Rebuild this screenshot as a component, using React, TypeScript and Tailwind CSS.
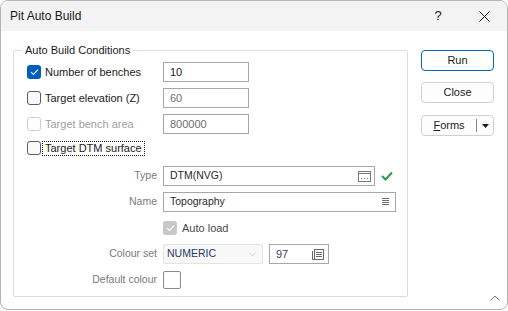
import { ChevronDown } from "lucide-react";

const ui = { fontFamily: '"Liberation Sans", Arial, sans-serif' };

const CheckMark = ({ color = "#ffffff" }: { color?: string }) => (
  <svg width="9" height="8" viewBox="0 0 9 8">
    <path d="M1 4.2 L3.4 6.4 L8 1.6" fill="none" stroke={color} strokeWidth="1.1" />
  </svg>
);

const Box = ({ checked, disabled }: { checked?: boolean; disabled?: boolean }) => {
  if (checked && disabled)
    return (
      <span className="flex h-[14px] w-[14px] shrink-0 items-center justify-center rounded-[3px] bg-[#c8c8c8]">
        <CheckMark />
      </span>
    );
  if (checked)
    return (
      <span className="flex h-[14px] w-[14px] shrink-0 items-center justify-center rounded-[3px] bg-[#005fb8]">
        <CheckMark />
      </span>
    );
  return (
    <span
      className={
        disabled
          ? "h-[14px] w-[14px] shrink-0 rounded-[3px] border border-[#cfcfcf] bg-white"
          : "h-[14px] w-[14px] shrink-0 rounded-[3px] border border-[#5c5c5c] bg-[#f9f9f9]"
      }
    />
  );
};

const Field = ({ value, dim, w = "w-[86px]" }: { value: string; dim?: boolean; w?: string }) => (
  <div
    className={`flex h-[20px] ${w} items-center border border-[#a6a6a6] bg-white pl-[6px] text-[11px] ${
      dim ? "text-[#6d6d6d]" : "text-[#1a1a1a]"
    }`}
  >
    {value}
  </div>
);

const SideLabel = ({ children }: { children: string }) => (
  <div className="w-[136px] shrink-0 pr-[6px] text-right text-[10.5px] text-[#7a7a7a]">{children}</div>
);

export default function App() {
  return (
    <div className="h-[311px] w-[508px] bg-white text-[#1a1a1a]" style={ui}>
      <div className="relative flex h-[310px] w-[508px] flex-col overflow-hidden rounded-[8px] border border-[#b4b4b4] bg-white">
        {/* title bar */}
        <div className="flex h-[30px] shrink-0 items-center justify-between bg-[#f3f3f3]">
          <span className="pl-[9px] text-[12px]">Pit Auto Build</span>
          <div className="flex h-full">
            <div className="flex w-[46px] items-center justify-center text-[13px] text-[#1a1a1a]">?</div>
            <div className="flex w-[46px] items-center justify-center">
              <svg width="11" height="11" viewBox="0 0 11 11">
                <path d="M0.5 0.5 L10.5 10.5 M10.5 0.5 L0.5 10.5" stroke="#1a1a1a" strokeWidth="1" />
              </svg>
            </div>
          </div>
        </div>

        {/* body */}
        <div className="flex flex-1 pl-[12px] pt-[19px]">
          <div className="relative h-[247px] w-[395px] shrink-0 rounded-[2px] border border-[#dcdcdc]">
            <span className="absolute -top-[8px] left-[8px] bg-white px-[3px] text-[11px] leading-[14px]">
              Auto Build Conditions
            </span>

            <div className="flex flex-col gap-[6px] pl-[13px] pt-[11px] text-[11px]">
              <div className="flex h-[20px] items-center">
                <div className="flex w-[136px] items-center gap-[4px]">
                  <Box checked />
                  <span>Number of benches</span>
                </div>
                <Field value="10" />
              </div>

              <div className="flex h-[20px] items-center">
                <div className="flex w-[136px] items-center gap-[4px]">
                  <Box />
                  <span>Target elevation (Z)</span>
                </div>
                <Field value="60" dim />
              </div>

              <div className="flex h-[20px] items-center">
                <div className="flex w-[136px] items-center gap-[4px] text-[#a0a0a0]">
                  <Box disabled />
                  <span>Target bench area</span>
                </div>
                <Field value="800000" dim />
              </div>

              <div className="-mt-[2px] mb-[2px] flex h-[20px] items-center">
                <div className="flex w-[136px] items-center gap-[1px]">
                  <Box />
                  <span className="border border-dotted border-[#1a1a1a] px-[2px] leading-[13px]">
                    Target DTM surface
                  </span>
                </div>
              </div>

              <div className="flex h-[20px] items-center">
                <SideLabel>Type</SideLabel>
                <div className="flex h-[20px] w-[212px] items-center justify-between border border-[#a6a6a6] pl-[6px] pr-[3px] text-[10.5px] text-[#2a2a2a]">
                  <span>DTM(NVG)</span>
                  <svg width="13" height="11" viewBox="0 0 13 11">
                    <rect x="0.5" y="0.5" width="12" height="10" fill="none" stroke="#7a7a7a" />
                    <line x1="0.5" y1="2.5" x2="12.5" y2="2.5" stroke="#7a7a7a" />
                    <rect x="3" y="7" width="1" height="1" fill="#6a6a6a" />
                    <rect x="6" y="7" width="1" height="1" fill="#6a6a6a" />
                    <rect x="9" y="7" width="1" height="1" fill="#6a6a6a" />
                  </svg>
                </div>
                <svg className="ml-[6px]" width="12" height="10" viewBox="0 0 12 10">
                  <path d="M1 5 L4.5 8.5 L11 1.5" fill="none" stroke="#2f9a4a" strokeWidth="2" />
                </svg>
              </div>

              <div className="flex h-[20px] items-center">
                <SideLabel>Name</SideLabel>
                <div className="flex h-[20px] w-[233px] items-center justify-between border border-[#a6a6a6] pl-[6px] pr-[6px] text-[10.5px] text-[#2a2a2a]">
                  <span>Topography</span>
                  <svg width="7" height="8" viewBox="0 0 7 8">
                    <path d="M0 0.5 H7 M0 2.5 H7 M0 4.5 H7 M0 6.5 H7" stroke="#6a6a6a" strokeWidth="1" />
                  </svg>
                </div>
              </div>

              <div className="flex h-[20px] items-center">
                <div className="w-[136px] shrink-0" />
                <Box checked disabled />
                <span className="ml-[5px] text-[#4a4a4a]">Auto load</span>
              </div>

              <div className="flex h-[20px] items-center">
                <SideLabel>Colour set</SideLabel>
                <div className="flex h-[20px] w-[100px] items-center justify-between rounded-[2px] border border-[#e3e3e3] bg-[#f8f8f8] pl-[3px] pr-[4px] text-[10.5px] text-[#243a6b]">
                  <span>NUMERIC</span>
                  <ChevronDown size={11} strokeWidth={1.2} color="#b5b5b5" />
                </div>
                <div className="ml-[6px] flex h-[20px] w-[60px] items-center justify-between border border-[#a6a6a6] pl-[6px] pr-[4px] text-[11px] text-[#3a3a7a]">
                  <span>97</span>
                  <svg width="12" height="11" viewBox="0 0 12 11">
                    <rect x="2.5" y="0.5" width="9" height="10" fill="none" stroke="#6a6a6a" />
                    <path d="M0.5 2 V10.5 H2 M4 3.5 H10 M4 5.5 H10 M4 7.5 H10" fill="none" stroke="#6a6a6a" />
                  </svg>
                </div>
              </div>

              <div className="flex h-[20px] items-center">
                <SideLabel>Default colour</SideLabel>
                <div className="h-[18px] w-[18px] rounded-[2px] border border-[#8a8a8a] bg-white" />
              </div>
            </div>
          </div>

          {/* buttons */}
          <div className="ml-[13px] flex flex-col text-[11px]">
            <button className="flex h-[21px] w-[73px] items-center justify-center rounded-[4px] border border-[#0067c0] bg-white">
              Run
            </button>
            <button className="mt-[11px] flex h-[21px] w-[73px] items-center justify-center rounded-[4px] border border-[#d1d1d1] bg-[#fdfdfd]">
              Close
            </button>
            <div className="mt-[12px] flex h-[21px] w-[73px] items-center rounded-[4px] border border-[#d1d1d1] bg-[#fdfdfd]">
              <span className="w-[54px] text-center">
                <span className="underline">F</span>orms
              </span>
              <span className="h-[13px] w-px bg-[#8a8a8a]" />
              <svg className="ml-[5px]" width="7" height="4" viewBox="0 0 7 4">
                <path d="M0 0 H7 L3.5 4 Z" fill="#1a1a1a" />
              </svg>
            </div>
          </div>
        </div>

        <svg className="absolute bottom-[8px] right-[7px]" width="10" height="6" viewBox="0 0 10 6">
          <path d="M0.5 5.5 L5 1 L9.5 5.5" fill="none" stroke="#7a7a7a" strokeWidth="1" />
        </svg>
      </div>
    </div>
  );
}
